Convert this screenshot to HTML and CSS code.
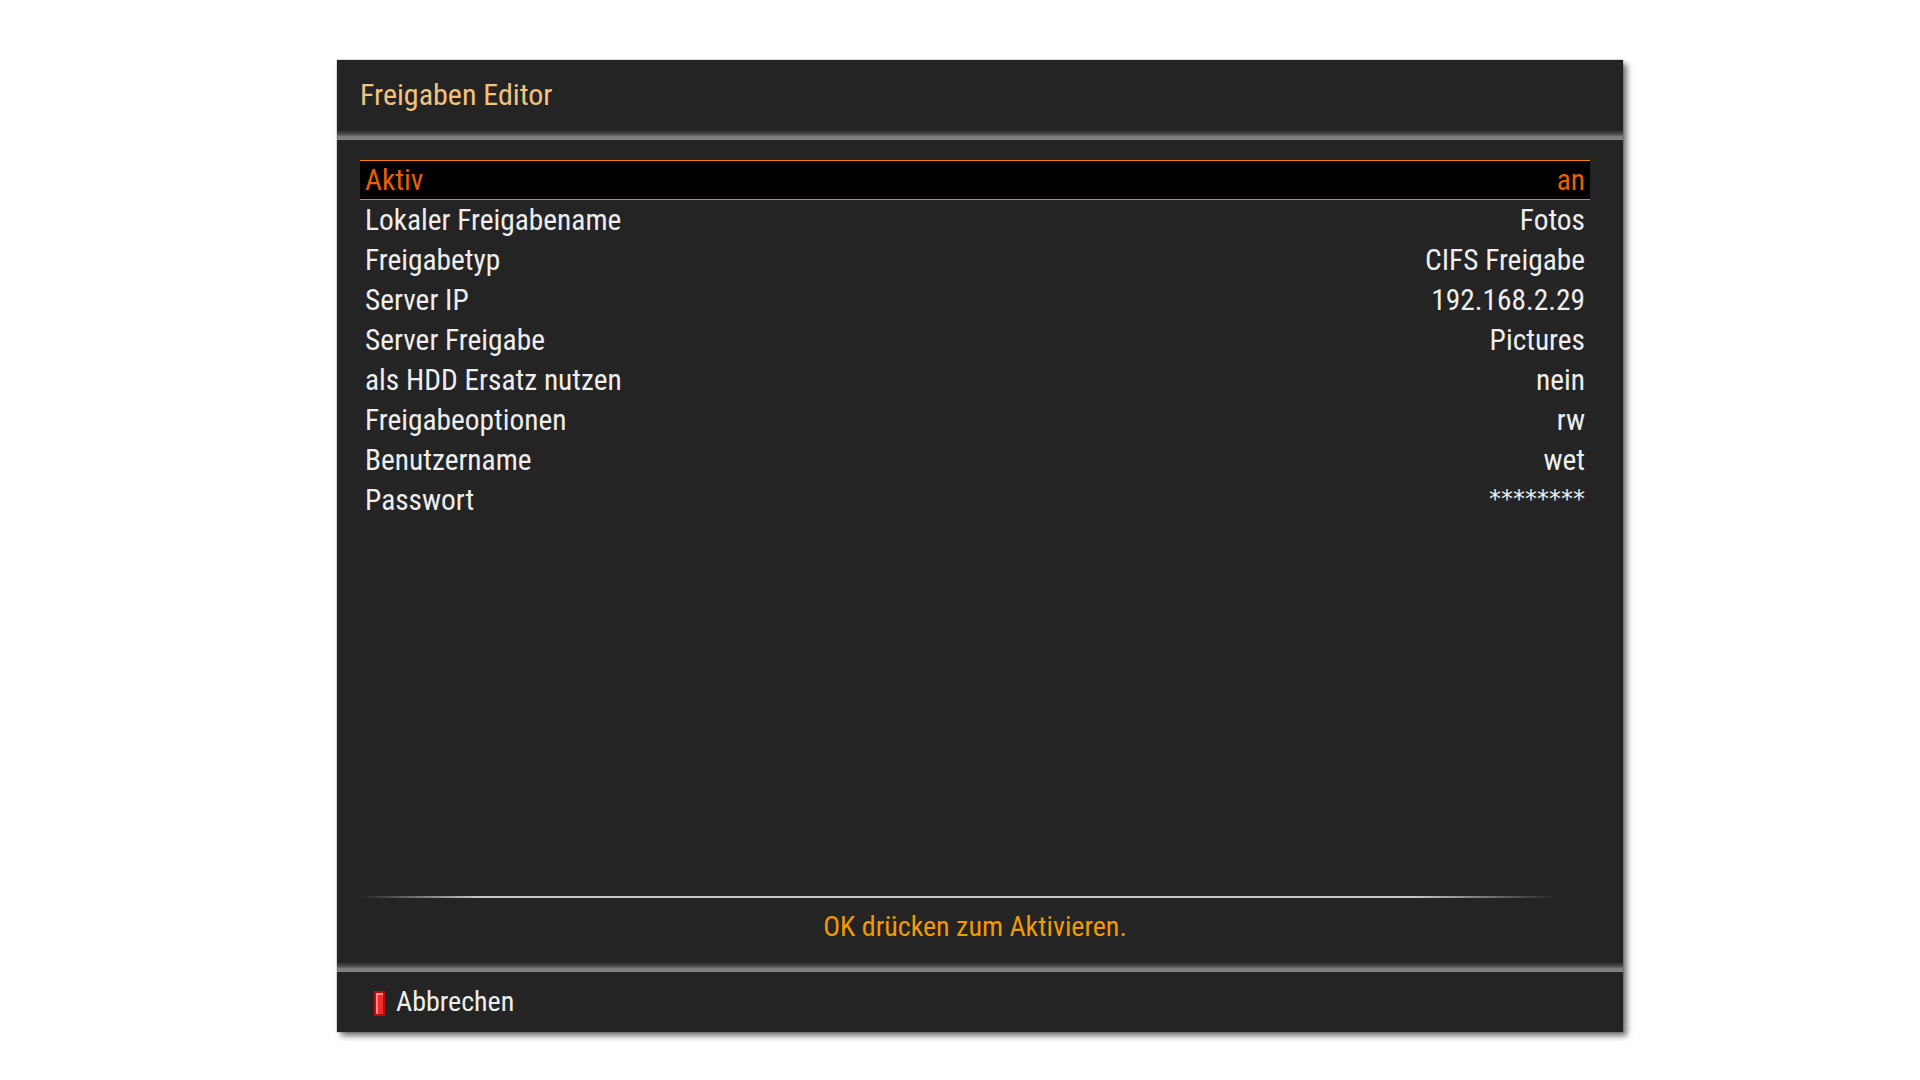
FILE: index.html
```html
<!DOCTYPE html>
<html lang="de">
<head>
<meta charset="utf-8">
<title>Freigaben Editor</title>
<link rel="stylesheet" href="styles.css">
</head>
<body>
<div class="screen">
  <div class="window">
    <div class="panel header">
      <div class="title">Freigaben Editor</div>
    </div>
    <div class="gap"></div>
    <div class="panel body">
      <div class="list">
        <div class="row selected"><span>Aktiv</span><span>an</span></div>
        <div class="row"><span>Lokaler Freigabename</span><span>Fotos</span></div>
        <div class="row"><span>Freigabetyp</span><span>CIFS Freigabe</span></div>
        <div class="row"><span>Server IP</span><span>192.168.2.29</span></div>
        <div class="row"><span>Server Freigabe</span><span>Pictures</span></div>
        <div class="row"><span>als HDD Ersatz nutzen</span><span>nein</span></div>
        <div class="row"><span>Freigabeoptionen</span><span>rw</span></div>
        <div class="row"><span>Benutzername</span><span>wet</span></div>
        <div class="row"><span>Passwort</span><span class="stars">********</span></div>
      </div>
      <div class="divider"></div>
      <div class="hint">OK drücken zum Aktivieren.</div>
    </div>
    <div class="gap"></div>
    <div class="panel footer">
      <span class="key-red"></span>
      <span class="key-label">Abbrechen</span>
    </div>
  </div>
</div>
</body>
</html>
```
FILE: styles.css
```css
html, body {
  margin: 0;
  padding: 0;
  background: #ffffff;
  width: 1920px;
  height: 1080px;
  overflow: hidden;
}
.screen {
  width: 1920px;
  height: 1080px;
  padding-top: 60px;
  padding-left: 337px;
  box-sizing: border-box;
}
.window {
  width: 1286px;
  display: flex;
  flex-direction: column;
  font-family: "Roboto Condensed", "Liberation Sans Narrow", "DejaVu Sans Condensed", Roboto, sans-serif;
  box-shadow: 4px 4px 6px rgba(0,0,0,0.55), 0 0 1px rgba(0,0,0,0.7);
}
.panel {
  background: #242424;
}
.gap {
  height: 9px;
  background: linear-gradient(to bottom, #303030 0%, #4a4a4a 35%, #7a7a7a 60%, #858585 100%);
}
.header {
  height: 71px;
  display: flex;
  align-items: center;
  padding-left: 23px;
  box-sizing: border-box;
}
.title {
  color: #f2c27e;
  font-size: 30px;
  line-height: 1;
  padding-bottom: 1px;
}
.body {
  height: 823px;
  box-sizing: border-box;
  padding: 20px 33px 0 23px;
  display: flex;
  flex-direction: column;
}
.list {
  display: flex;
  flex-direction: column;
  height: 736px;
}
.row {
  height: 40px;
  display: flex;
  justify-content: space-between;
  align-items: center;
  padding: 0 5px 0 5px;
  color: #eeeeee;
  font-size: 29.4px;
  box-sizing: border-box;
}
.row.selected {
  background: #000000;
  border-top: 1px solid #ff7d00;
  border-bottom: 1px solid #ff7d00;
  color: #e85f00;
}
.stars {
  font-family: "DejaVu Sans", sans-serif;
  font-size: 24px;
  position: relative;
  top: -1px;
}
.divider {
  height: 2px;
  margin: 0 33px 0 0;
  background: linear-gradient(to right, rgba(200,200,200,0) 0%, #c8c8c8 10%, #c8c8c8 88%, rgba(200,200,200,0) 100%);
}
.hint {
  text-align: center;
  color: #f09a00;
  font-size: 28px;
  margin-top: 12px;
}
.footer {
  height: 60px;
  display: flex;
  align-items: center;
  padding-left: 37px;
  box-sizing: border-box;
  gap: 11px;
}
.key-red {
  width: 7px;
  height: 21px;
  background: #f22a2a;
  border: 2px solid #b80c0c;
  box-shadow: inset 2px 2px 0 #ff8a8a;
  margin-top: 2px;
}
.key-label {
  color: #eeeeee;
  font-size: 28px;
  padding-bottom: 1px;
}
```
